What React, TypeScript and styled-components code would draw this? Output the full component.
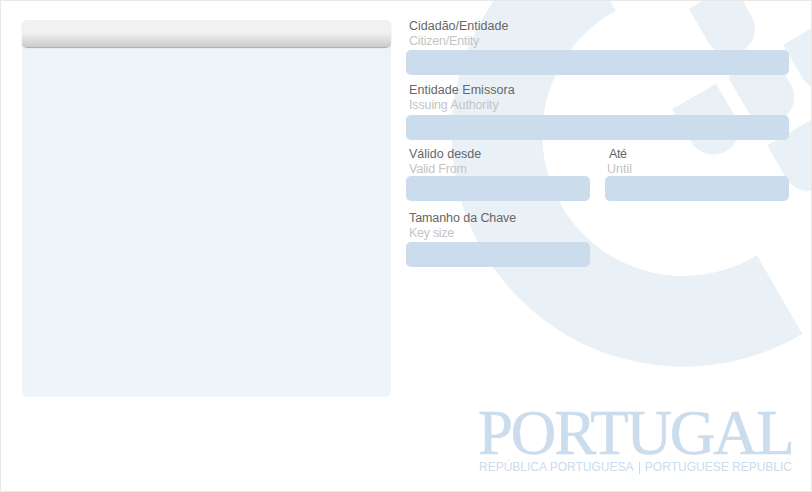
import React from "react";
import styled, { createGlobalStyle } from "styled-components";

const GlobalStyle = createGlobalStyle`
  *, *::before, *::after { box-sizing: border-box; }
  body { margin: 0; background: #fff; }
`;

const Window = styled.main`
  position: relative;
  width: 812px;
  height: 492px;
  overflow: hidden;
  display: flex;
  align-items: flex-start;
  padding: 17px 22px 0 21px;
  background: #fff;
  border: 1px solid #e8e8e8;
  font-family: "Liberation Sans", Arial, sans-serif;
`;

const Watermark = styled.svg`
  position: absolute;
  inset: 0;
  fill: #e9f1f7;
`;

const Panel = styled.section`
  position: relative;
  width: 369px;
  height: 377px;
  margin-top: 2px;
  background: #eff4f8;
  border-radius: 5px;
`;

const PanelHeader = styled.header`
  height: 27px;
  border-radius: 5px;
  background: linear-gradient(#f2f2f2 0%, #f1f1f1 48%, #e2e2e2 68%, #cacaca 100%);
  box-shadow: 0 1px 1px #a8abad;
`;

const Details = styled.div`
  position: relative;
  width: 383px;
  margin-left: 15px;
  display: flex;
  flex-direction: column;
`;

const Fields = styled.div`
  display: grid;
  grid-template-columns: 184px 184px;
  column-gap: 15px;
  grid-auto-rows: 64px;
  height: 391px;
  align-content: start;
`;

const FieldBox = styled.div<{ $wide?: boolean }>`
  grid-column: ${(p) => (p.$wide ? "1 / -1" : "auto")};
  display: flex;
  flex-direction: column;
`;

const Label = styled.div<{ $indent: number; $spacing: number }>`
  padding-left: ${(p) => p.$indent}px;
  font-size: 12.5px;
  line-height: 17px;
  letter-spacing: ${(p) => p.$spacing}px;
  color: #666;
  white-space: nowrap;
`;

const SubLabel = styled(Label)`
  line-height: 13px;
  color: #c4c4c4;
`;

const Value = styled.div<{ $gap: number }>`
  height: 25px;
  flex: none;
  margin-top: ${(p) => p.$gap}px;
  background: #cbdcec;
  border-radius: 5px;
`;

const Brand = styled.footer`
  width: 313px;
  margin-left: 73px;
  color: #cbdcec;
`;

const Country = styled.div`
  height: 51px;
  margin-left: -1px;
  font-family: "Liberation Serif", "Times New Roman", serif;
  font-size: 63px;
  line-height: 48px;
  letter-spacing: -2.2px;
  -webkit-text-stroke: 0.6px #cbdcec;
  white-space: nowrap;
`;

const Republic = styled.div`
  display: flex;
  align-items: center;
  justify-content: space-between;
  height: 15px;
  font-size: 12px;
  line-height: 15px;
  white-space: nowrap;
`;

const Divider = styled.i`
  width: 1px;
  height: 12px;
  background: #cbdcec;
`;

type FieldProps = {
  pt: string;
  en: string;
  ptSpacing?: number;
  enSpacing?: number;
  gap: number;
  wide?: boolean;
  indent?: [number, number];
};

function Field({ pt, en, ptSpacing = 0, enSpacing = 0, gap, wide, indent = [3, 3] }: FieldProps) {
  return (
    <FieldBox $wide={wide}>
      <Label $indent={indent[0]} $spacing={ptSpacing}>{pt}</Label>
      <SubLabel $indent={indent[1]} $spacing={enSpacing}>{en}</SubLabel>
      <Value $gap={gap} />
    </FieldBox>
  );
}

// Upper-left corner of every petal beside the ring.
const petals = [
  [688.8, 8.7],
  [728, 77],
  [672.3, 109],
  [783, 44.7],
  [767.2, 145.3],
];

export default function App() {
  return (
    <>
      <GlobalStyle />
      <Window>
        <Watermark width="810" height="490" viewBox="1 1 810 490" aria-hidden="true">
          {/* Open ring centred on (683.5, 134.6) */}
          <path
            d="M802.3 334 A232.1 232.1 0 0 1 451.4 134.6 A232.1 232.1 0 0 1 570.3 -68
               L615.8 10.8 A141.2 141.2 0 0 0 542.3 134.6 A141.2 141.2 0 0 0 757 255.3 Z"
          />
          {petals.map(([x, y]) => (
            <path
              key={`${x}-${y}`}
              d="M0 0 H50.6 V38 A25.3 25.3 0 0 1 0 38 Z"
              transform={`translate(${x} ${y}) rotate(-30)`}
            />
          ))}
        </Watermark>
        <Panel>
          <PanelHeader />
        </Panel>
        <Details>
          <Fields>
            <Field wide pt="Cidadão/Entidade" en="Citizen/Entity" enSpacing={-0.2} gap={2} />
            <Field wide pt="Entidade Emissora" en="Issuing Authority" ptSpacing={0.05} enSpacing={-0.13} gap={3} />
            <Field pt="Válido desde" en="Valid From" enSpacing={-0.18} gap={0} />
            <Field pt="Até" en="Until" ptSpacing={-0.4} gap={0} indent={[4, 2]} />
            <Field pt="Tamanho da Chave" en="Key size" ptSpacing={-0.08} enSpacing={-0.28} gap={2} />
          </Fields>
          <Brand>
            <Country>PORTUGAL</Country>
            <Republic>
              <span>REPÚBLICA PORTUGUESA</span>
              <Divider />
              <span>PORTUGUESE REPUBLIC</span>
            </Republic>
          </Brand>
        </Details>
      </Window>
    </>
  );
}
